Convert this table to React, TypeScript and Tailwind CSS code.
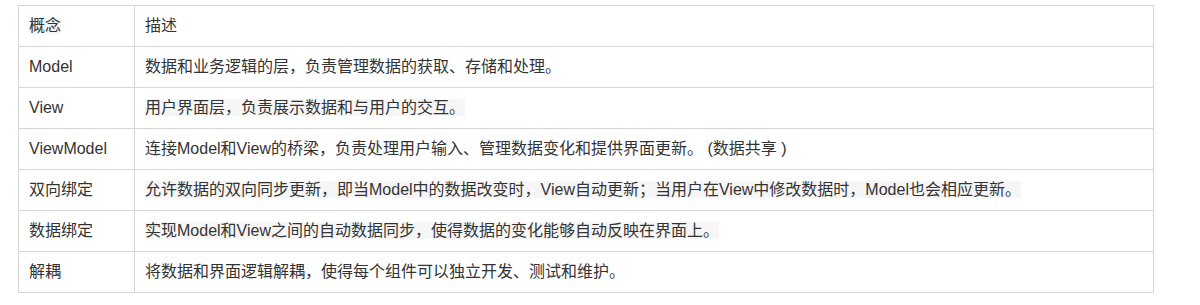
const rows: { term: string; desc: string; mark?: boolean; markTerm?: boolean }[] = [
  { term: "概念", desc: "描述", markTerm: true },
  { term: "Model", desc: "数据和业务逻辑的层，负责管理数据的获取、存储和处理。" },
  { term: "View", desc: "用户界面层，负责展示数据和与用户的交互。", mark: true },
  {
    term: "ViewModel",
    desc: "连接Model和View的桥梁，负责处理用户输入、管理数据变化和提供界面更新。 (数据共享 )",
  },
  {
    term: "双向绑定",
    desc: "允许数据的双向同步更新，即当Model中的数据改变时，View自动更新；当用户在View中修改数据时，Model也会相应更新。",
    mark: true,
  },
  {
    term: "数据绑定",
    desc: "实现Model和View之间的自动数据同步，使得数据的变化能够自动反映在界面上。",
    mark: true,
  },
  { term: "解耦", desc: "将数据和界面逻辑解耦，使得每个组件可以独立开发、测试和维护。" },
];

export default function App() {
  return (
    <div
      className="h-[305px] w-[1200px] bg-white pl-[18px] pt-[5px] text-[16px] text-[#333333]"
      style={{ fontFamily: '"Liberation Sans", "Noto Sans CJK SC", sans-serif' }}
    >
      <table className="w-[1136px] table-fixed border-collapse">
        <colgroup>
          <col className="w-[116px]" />
          <col />
        </colgroup>
        <tbody>
          {rows.map((row) => (
            <tr key={row.term} className="h-[41px]">
              <td className="border border-[#d6d6d6] px-[10px] align-middle leading-[22px]">
                <span className={row.markTerm ? "bg-[#f6f6f6]" : ""}>{row.term}</span>
              </td>
              <td className="border border-[#d6d6d6] px-[10px] align-middle leading-[22px]">
                <span className={row.mark ? "bg-[#f6f6f6]" : ""}>{row.desc}</span>
              </td>
            </tr>
          ))}
        </tbody>
      </table>
    </div>
  );
}
